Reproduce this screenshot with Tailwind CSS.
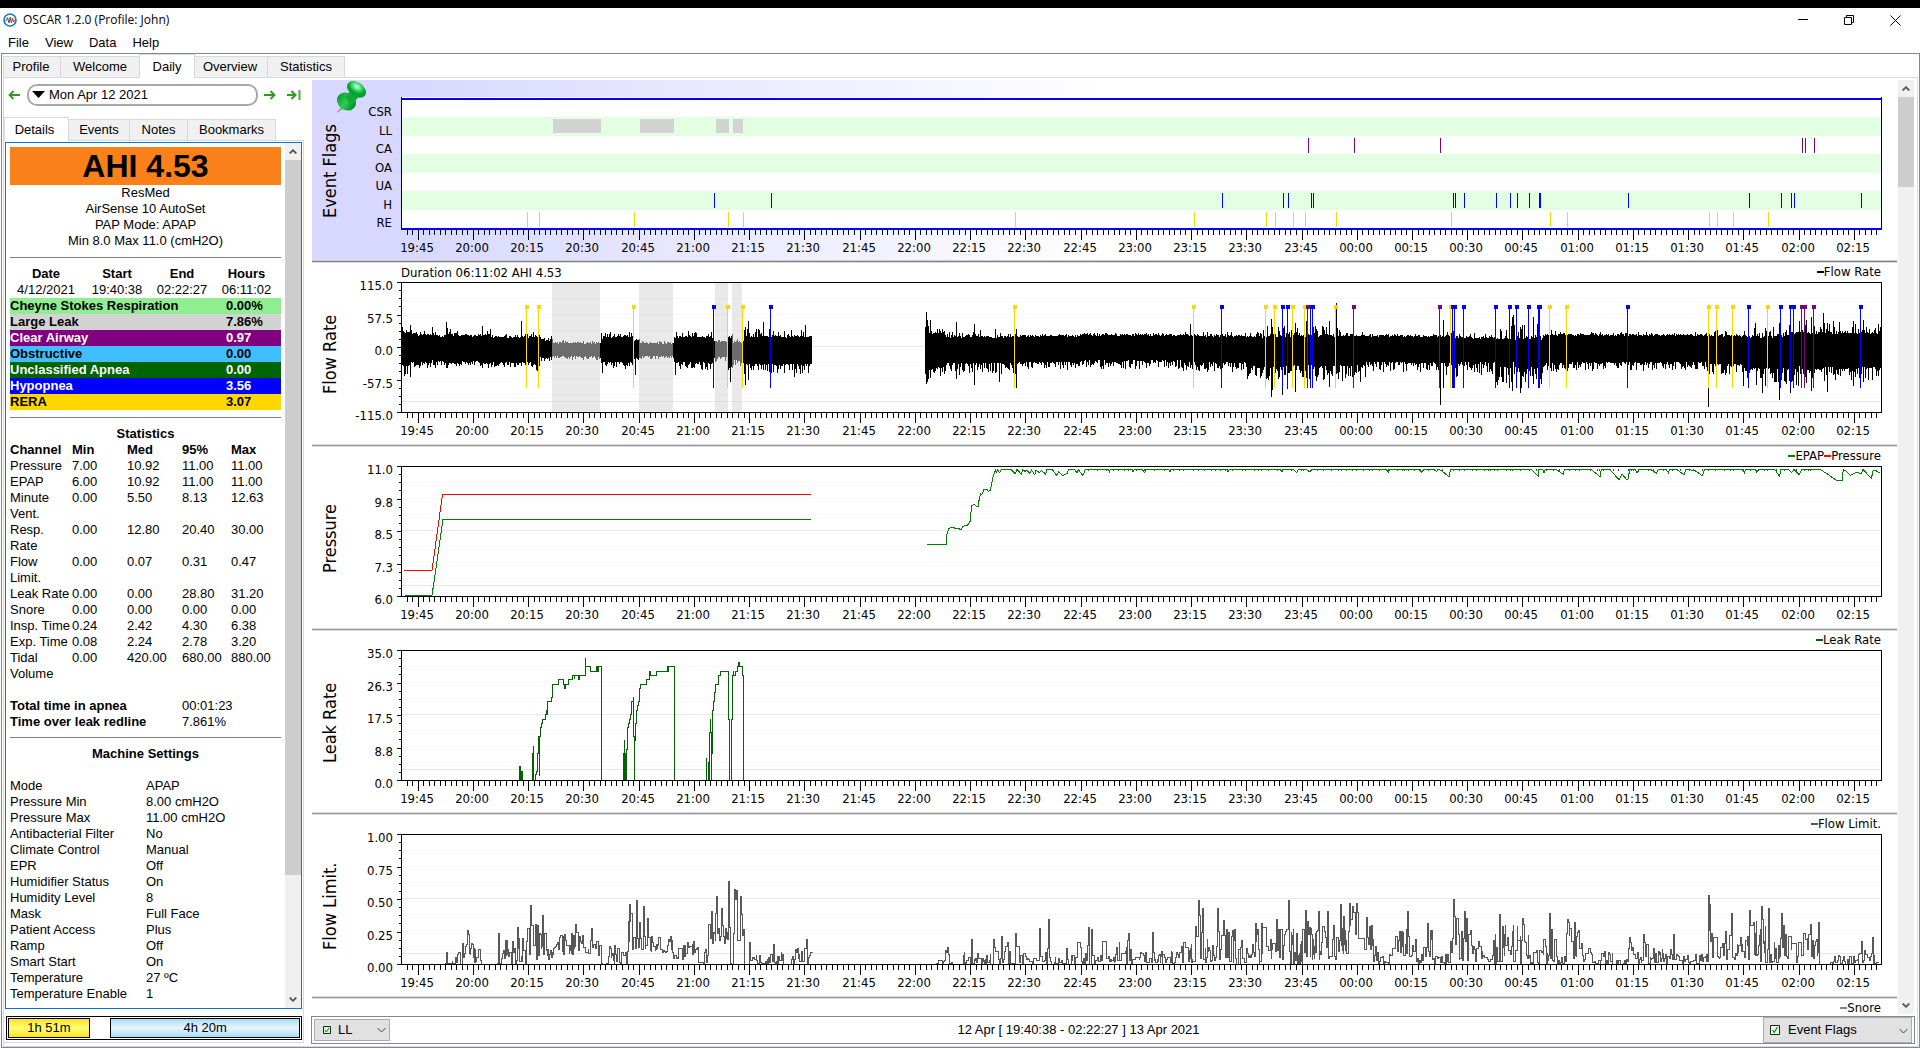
<!DOCTYPE html>
<html lang="en">
<head>
<meta charset="utf-8">
<title>OSCAR 1.2.0 (Profile: John)</title>
<script src="https://cdn.jsdelivr.net/npm/@tailwindcss/browser@4"></script>
</head>
<body class="flex h-screen flex-col overflow-hidden bg-white font-['Liberation_Sans',Arial,sans-serif] text-[13px] leading-4 text-black">
<div class="h-2 shrink-0 bg-black"></div>

<header class="shrink-0">
  <div class="flex h-6 items-center pl-[3px]">
    <svg class="size-[14px]" viewBox="0 0 14 14"><circle cx="7" cy="7" r="6" fill="#fff" stroke="#1878c0" stroke-width="1.6"/><path d="M2.5 7.5h1l1-3 1.5 5.5 1.2-6 1.2 6" fill="none" stroke="#555" stroke-width="1"/><path d="M8.4 10l1.1-5 1 4 .8-1.500h1" fill="none" stroke="#d22" stroke-width="1"/></svg>
    <h1 class="ml-[6px] font-['Open_Sans','Noto_Sans',sans-serif] text-xs">OSCAR 1.2.0 (Profile: John)</h1>
    <div class="ml-auto flex pr-[2px]">
      <button class="flex h-6 w-[46px] items-center justify-center" aria-label="Minimize"><svg class="size-[11px]" viewBox="0 0 11 11"><path d="M0 4.500h10" stroke="#000"/></svg></button>
      <button class="flex h-6 w-[46px] items-center justify-center" aria-label="Restore"><svg class="size-[11px]" viewBox="0 0 11 11" fill="none" stroke="#000"><path d="M.5 2.500h7v7h-7zM2.500 2.500v-2h7v7h-2"/></svg></button>
      <button class="flex h-6 w-[46px] items-center justify-center" aria-label="Close"><svg class="size-[11px]" viewBox="0 0 11 11"><path d="M.5 .5l10 10M10.500 .5l-10 10" stroke="#000"/></svg></button>
    </div>
  </div>
  <nav class="flex h-[21px] items-center gap-4 pl-2">
    <button>File</button><button>View</button><button>Data</button><button>Help</button>
  </nav>
</header>

<main class="ml-px flex min-h-0 flex-1 flex-col border border-[#828790]">
  <div class="ml-px flex h-[23px] shrink-0 items-end text-center">
    <button class="h-[21px] w-[58px] border border-b-0 border-[#d9d9d9] bg-[#f0f0f0] pr-[2px]">Profile</button>
    <button class="h-[21px] w-[78px] border-t border-[#d9d9d9] bg-[#f0f0f0]">Welcome</button>
    <button class="relative -mb-px h-6 w-[56px] border border-b-0 border-[#d9d9d9] bg-white">Daily</button>
    <button class="h-[21px] w-[72px] border-t border-[#d9d9d9] bg-[#f0f0f0] pr-[2px]">Overview</button>
    <button class="h-[21px] w-[78px] border border-b-0 border-[#d9d9d9] bg-[#f0f0f0]">Statistics</button>
  </div>

  <div class="mx-px flex min-h-0 flex-1 border border-[#d9d9d9]">
    <section class="flex w-[300px] shrink-0 flex-col pb-[3px]">
      <div class="flex h-[33px] shrink-0 items-center pl-1">
        <button aria-label="Previous day"><svg class="size-3" viewBox="0 0 12 12"><path d="M5.500 2L1.500 6l4 4M1.500 6H12" fill="none" stroke="#2f9a1e" stroke-width="1.800"/></svg></button>
        <button class="ml-[7px] flex h-[22px] w-[231px] items-center rounded-[10px] border-2 border-[#a8a8a8] pl-[3px]"><svg class="mr-1 h-[7px] w-[13px]" viewBox="0 0 13 7"><path d="M0 0h13L6.500 7z"/></svg>Mon Apr 12 2021</button>
        <button class="ml-[6px]" aria-label="Next day"><svg class="size-3" viewBox="0 0 12 12"><path d="M6.500 2l4 4-4 4M10.500 6H0" fill="none" stroke="#2f9a1e" stroke-width="1.800"/></svg></button>
        <button class="ml-[11px]" aria-label="Latest day"><svg class="h-3 w-[14px]" viewBox="0 0 14 12"><path d="M4.500 2L8.500 6l-4 4M8.500 6H0" fill="none" stroke="#2f9a1e" stroke-width="2"/><path d="M12.500 1v10" stroke="#5aa34e" stroke-width="2"/></svg></button>
      </div>
      <div class="flex h-[29px] shrink-0 items-end">
        <button class="relative -mb-px h-6 w-[65px] border border-b-0 border-[#d9d9d9] bg-white pr-1">Details</button>
        <button class="h-[21px] w-[61px] border-t border-r border-[#d9d9d9] bg-[#f0f0f0]">Events</button>
        <button class="h-[21px] w-[58px] border-t border-r border-[#d9d9d9] bg-[#f0f0f0]">Notes</button>
        <button class="h-[21px] w-[88px] border-t border-r border-[#d9d9d9] bg-[#f0f0f0]">Bookmarks</button>
      </div>
      <div class="flex min-h-0 flex-1 flex-col border-t border-r border-b border-[#d9d9d9] p-px">
        <div class="flex min-h-0 flex-1 border border-[#0078d7]">
          <div class="min-w-0 flex-1 overflow-hidden px-1 pt-1">
            <h2 class="h-[38px] bg-[#fa8119] text-center text-[32px] leading-[38px] font-bold">AHI 4.53</h2>
            <p class="text-center">ResMed<br>AirSense 10 AutoSet<br>PAP Mode: APAP<br>Min 8.0 Max 11.0 (cmH2O)</p>
            <hr class="my-2 border-[#808080]">
            <table class="w-full table-fixed text-center">
              <colgroup><col class="w-[72px]"><col class="w-[70px]"><col class="w-[60px]"><col></colgroup>
              <tr><th>Date</th><th>Start</th><th>End</th><th>Hours</th></tr>
              <tr><td>4/12/2021</td><td>19:40:38</td><td>02:22:27</td><td>06:11:02</td></tr>
            </table>
            <table class="w-full table-fixed font-bold">
              <colgroup><col class="w-[216px]"><col></colgroup>
              <tr class="bg-[#90ee90]"><td>Cheyne Stokes Respiration</td><td>0.00%</td></tr>
              <tr class="bg-[#d3d3d3]"><td>Large Leak</td><td>7.86%</td></tr>
              <tr class="bg-[#800080] text-white"><td>Clear Airway</td><td>0.97</td></tr>
              <tr class="bg-[#40bfff]"><td>Obstructive</td><td>0.00</td></tr>
              <tr class="bg-[#006400] text-white"><td>Unclassified Apnea</td><td>0.00</td></tr>
              <tr class="bg-[#0000ff] text-white"><td>Hypopnea</td><td>3.56</td></tr>
              <tr class="bg-[#ffd700]"><td>RERA</td><td>3.07</td></tr>
            </table>
            <hr class="mt-[7px] mb-2 border-[#808080]">
            <table class="w-full table-fixed text-left">
              <caption class="font-bold">Statistics</caption>
              <colgroup><col class="w-[62px]"><col class="w-[55px]"><col class="w-[55px]"><col class="w-[49px]"><col></colgroup>
              <tbody class="align-top">
              <tr><th>Channel</th><th>Min</th><th>Med</th><th>95%</th><th>Max</th></tr>
              <tr><td>Pressure</td><td>7.00</td><td>10.92</td><td>11.00</td><td>11.00</td></tr>
              <tr><td>EPAP</td><td>6.00</td><td>10.92</td><td>11.00</td><td>11.00</td></tr>
              <tr><td>Minute<br>Vent.</td><td>0.00</td><td>5.50</td><td>8.13</td><td>12.63</td></tr>
              <tr><td>Resp.<br>Rate</td><td>0.00</td><td>12.80</td><td>20.40</td><td>30.00</td></tr>
              <tr><td>Flow<br>Limit.</td><td>0.00</td><td>0.07</td><td>0.31</td><td>0.47</td></tr>
              <tr><td class="whitespace-nowrap">Leak Rate</td><td>0.00</td><td>0.00</td><td>28.80</td><td>31.20</td></tr>
              <tr><td>Snore</td><td>0.00</td><td>0.00</td><td>0.00</td><td>0.00</td></tr>
              <tr><td class="whitespace-nowrap">Insp. Time</td><td>0.24</td><td>2.42</td><td>4.30</td><td>6.38</td></tr>
              <tr><td class="whitespace-nowrap">Exp. Time</td><td>0.08</td><td>2.24</td><td>2.78</td><td>3.20</td></tr>
              <tr><td>Tidal<br>Volume</td><td>0.00</td><td>420.00</td><td>680.00</td><td>880.00</td></tr>
              </tbody>
            </table>
            <table class="mt-4 w-full table-fixed text-left">
              <colgroup><col class="w-[172px]"><col></colgroup>
              <tr><th>Total time in apnea</th><td>00:01:23</td></tr>
              <tr><th>Time over leak redline</th><td>7.861%</td></tr>
            </table>
            <hr class="mt-[7px] mb-2 border-[#808080]">
            <table class="w-full table-fixed">
              <caption class="mb-4 font-bold">Machine Settings</caption>
              <colgroup><col class="w-[136px]"><col></colgroup>
              <tr><td>Mode</td><td>APAP</td></tr>
              <tr><td>Pressure Min</td><td>8.00 cmH2O</td></tr>
              <tr><td>Pressure Max</td><td>11.00 cmH2O</td></tr>
              <tr><td>Antibacterial Filter</td><td>No</td></tr>
              <tr><td>Climate Control</td><td>Manual</td></tr>
              <tr><td>EPR</td><td>Off</td></tr>
              <tr><td>Humidifier Status</td><td>On</td></tr>
              <tr><td>Humidity Level</td><td>8</td></tr>
              <tr><td>Mask</td><td>Full Face</td></tr>
              <tr><td>Patient Access</td><td>Plus</td></tr>
              <tr><td>Ramp</td><td>Off</td></tr>
              <tr><td>Smart Start</td><td>On</td></tr>
              <tr><td>Temperature</td><td>27 ºC</td></tr>
              <tr><td>Temperature Enable</td><td>1</td></tr>
            </table>
          </div>
          <div class="flex w-4 shrink-0 flex-col bg-[#f0f0f0]">
            <button class="flex h-[17px] items-center justify-center" aria-label="Scroll up"><svg class="h-[5px] w-2" viewBox="0 0 8 5"><path d="M.7 4.500L4 1.200l3.300 3.300" fill="none" stroke="#555" stroke-width="1.800"/></svg></button>
            <div class="min-h-0 flex-1"><div class="h-[86%] bg-[#cdcdcd]"></div></div>
            <button class="flex h-[17px] items-center justify-center" aria-label="Scroll down"><svg class="h-[5px] w-2" viewBox="0 0 8 5"><path d="M.7 .5L4 3.800 7.300 .5" fill="none" stroke="#555" stroke-width="1.800"/></svg></button>
          </div>
        </div>
        <div class="mt-[7px] mb-px ml-px flex h-6 shrink-0 justify-between border border-black p-px text-center leading-[18px]">
          <div class="w-[28%] border border-black bg-linear-to-b from-[#ffe020] via-[#ffff70] to-[#ffe020]">1h 51m</div>
          <div class="w-[65%] border border-black bg-linear-to-b from-[#a8dcf4] via-[#e8f6fc] to-[#a8dcf4]">4h 20m</div>
        </div>
      </div>
    </section>

    <section class="flex min-w-0 flex-1 flex-col pt-[2px] pr-[2px] pb-[2px] pl-[7px]">
      <div class="mx-px flex min-h-0 flex-1">
        <div id="graphs" class="mr-px min-w-0 flex-1 overflow-hidden font-['DejaVu_Sans_Condensed','Noto_Sans',sans-serif]"></div>
        <div class="flex w-4 shrink-0 flex-col bg-[#f0f0f0]">
          <button class="flex h-[17px] items-center justify-center" aria-label="Scroll graphs up"><svg class="h-[5px] w-2" viewBox="0 0 8 5"><path d="M.7 4.500L4 1.200l3.300 3.300" fill="none" stroke="#555" stroke-width="1.800"/></svg></button>
          <div class="min-h-0 flex-1"><div class="h-[10%] bg-[#cdcdcd]"></div></div>
          <button class="flex h-[17px] items-center justify-center" aria-label="Scroll graphs down"><svg class="h-[5px] w-2" viewBox="0 0 8 5"><path d="M.7 .5L4 3.800 7.300 .5" fill="none" stroke="#555" stroke-width="1.800"/></svg></button>
        </div>
      </div>
      <div class="mt-[2px] flex h-7 shrink-0 items-center justify-between border border-[#828790] px-[2px]">
        <div class="relative">
          <select aria-label="Event type" class="h-[22px] w-[76px] appearance-none border border-[#adadad] bg-[#e1e1e1] pl-[23px] leading-4"><option>LL</option></select>
          <svg class="pointer-events-none absolute top-[7px] left-[9px] size-2" viewBox="0 0 8 8"><path d="M.5.5h7v7h-7z" fill="#cfc" stroke="#222"/><path d="M2 4l1.300 2L6 2" fill="none" stroke="#080"/></svg>
          <svg class="pointer-events-none absolute top-2 right-1 h-[6px] w-[9px]" viewBox="0 0 9 6"><path d="M.5 1l4 4 4-4" fill="none" stroke="#444"/></svg>
        </div>
        <p class="pl-1">12 Apr [ 19:40:38 - 02:22:27 ] 13 Apr 2021</p>
        <div class="relative">
          <select aria-label="Visible graphs" class="h-[26px] w-[149px] appearance-none border border-[#adadad] bg-[#e1e1e1] pl-6 leading-4"><option>Event Flags</option></select>
          <svg class="pointer-events-none absolute top-2 left-[7px] size-[10px]" viewBox="0 0 10 10"><path d="M.5.5h9v9h-9z" fill="#efe" stroke="#222"/><path d="M2.500 5l1.700 2.500 3.300-5.500" fill="none" stroke="#080" stroke-width="1.200"/></svg>
          <svg class="pointer-events-none absolute top-[11px] right-1 h-[6px] w-[9px]" viewBox="0 0 9 6"><path d="M.5 1l4 4 4-4" fill="none" stroke="#444"/></svg>
        </div>
      </div>
    </section>
  </div>
</main>

<script>
const W = 1481, H = 131;
const PX_PER_MIN = 3.683;
const RE = [126,138,233,327,342,614,793,865,874,892,904,935,1050,1149,1166,1308,1316,1332,1367];
const HY = [313,370,821,882,887,910,912,1052,1054,1063,1095,1109,1116,1128,1138,1139,1227,1348,1380,1390,1393,1460];
const CA = [907,953,1039,1401,1404,1413];
const LL = [[152,48],[239,34],[315,13],[332,10]];

// Small seeded generator, so that the traces are the same on every load
let seed = 20210412;
const rnd = () => (seed = (seed * 1664525 + 1013904223) >>> 0) / 4294967296;

const bars = (xs, y, h, c) => `<path d="${xs.map(x => `M${x + .5} ${y}v${h}`).join('')}" stroke="${c}"/>`;
const svg = (h, body) => `<svg class="block w-full" style="height:${h}px" viewBox="0 0 ${W} ${h}" preserveAspectRatio="none" shape-rendering="crispEdges" fill="none">${body}</svg>`;

function axis() {
  let minor = '', major = '', labels = '';
  for (let i = -2; ; i++) {
    const x = Math.floor((4.367 + i * 1.5) * PX_PER_MIN + 1);
    if (x >= W - 1) break;
    if (i % 10 === 0) {
      major += `M${x + .5} 0v10`;
      const m = (19 * 60 + 45 + i * 1.5) % 1440;
      const t = String(Math.floor(m / 60)).padStart(2, '0') + ':' + String(m % 60).padStart(2, '0');
      labels += `<span class="absolute -translate-x-1/2" style="left:${((x - 1) / W * 100).toFixed(3)}%">${t}</span>`;
    } else minor += `M${x + .5} 0v5`;
  }
  return svg(10, `<path d="${minor}${major}" stroke="#000"/>`) + `<div class="relative h-4">${labels}</div>`;
}

function grid() {
  let s = '';
  for (let y = 16; y < 128; y += 16) s += `<path d="M0 ${y + .5}H${W}" stroke="${y === 64 ? '#e8e8e8' : '#f7f7f7'}"/>`;
  return s + `<path d="M0 119.500H${W}" stroke="#e8e8e8"/>`;
}
const frame = `<path d="M.5 .5H${W - .5}V${H - .5}H.5z" stroke="#000"/>`;

function yTicks() {
  let d = '';
  for (let i = 0; i <= 16; i++) { const y = Math.round(i * 130 / 16) + .5; d += i % 4 ? `M5 ${y}h2` : `M3 ${y}h4`; }
  return `<svg class="mt-[19px] h-[131px] w-[7px] shrink-0" viewBox="0 0 7 131" shape-rendering="crispEdges"><path d="${d}" stroke="#000"/></svg>`;
}

function flowRate() {
  // [from, up, down, extra up, extra down]
  const env = [[0,14,16,10,12],[10,11,13,4,7],[35,10,12,3,5],[44,11,14,7,5],[58,10,12,3,5],[79,11,14,8,5],[90,9,13,3,6],[130,9,14,5,8],[139,6,8,4,4],[152,3,7,2,4],[200,9,13,5,7],[232,6,9,3,3],[239,3,7,2,4],[273,9,13,6,8],[313,4,8,2,5],[327,10,18,3,15],[332,4,10,8,8],[343,9,15,9,10],[411,0,0,0,0],[524,19,20,15,14],[528,12,18,8,10],[545,9,14,7,12],[615,10,13,3,8],[680,11,11,2,9],[780,10,13,5,10],[845,9,17,12,16],[890,10,16,11,16],[940,10,16,5,17],[965,10,13,2,10],[1039,9,14,9,18],[1060,8,13,5,14],[1095,7,18,18,20],[1142,11,14,6,9],[1170,11,13,3,9],[1306,10,15,6,12],[1345,9,19,10,20],[1388,13,20,13,18],[1420,13,18,11,14],[1481,0,0,0,0]];
  const spikes = {9:[22,29],31:[20,12],45:[25,20],81:[21,20],120:[26,18],201:[8,25],234:[7,27],274:[9,27],329:[9,34],344:[20,37],347:[26,32],362:[25,22],393:[12,29],404:[22,16],525:[35,36],526:[27,34],529:[27,30],555:[25,31],573:[23,37],598:[10,34],615:[18,40],789:[23,20],870:[28,49],871:[20,42],881:[22,47],886:[20,41],894:[24,44],905:[26,30],928:[26,39],935:[44,26],1039:[12,57],1042:[27,40],1052:[16,40],1111:[30,43],1112:[32,14],1119:[20,45],1120:[18,40],1132:[30,36],1137:[24,20],1307:[27,59],1342:[12,38],1354:[24,20],1361:[14,45],1378:[24,52],1389:[37,45],1398:[26,18],1410:[30,43],1422:[34,20],1426:[24,44],1452:[26,38],1462:[27,34],1477:[23,28]};
  let d = '', k = 0;
  for (let x = 1; x < W - 1; x++) {
    while (k < env.length - 1 && env[k + 1][0] <= x) k++;
    const e = env[k];
    if (!e[1]) continue;
    let u = e[1] + e[3] * rnd() ** 4 + rnd() * 2, v = e[2] + 1 + e[4] * rnd() ** 1.800;
    if (spikes[x]) [u, v] = spikes[x];
    d += `M${x + .5} ${65 - Math.round(u)}V${66 + Math.round(v)}`;
  }
  const flags = (xs, c) => bars(xs.map(x => x - 1), 24, 82, c) + xs.map(x => `<path d="M${x - 2} 23h4v4h-4z" fill="${c}"/>`).join('');
  return grid() + `<path d="${d}" stroke="#000"/>` + LL.map(([x, w]) => `<path d="M${x - 1} 1h${w}v129h-${w}z" fill="#d3d3d3" fill-opacity=".51"/>`).join('')
    + flags(RE, '#ffd700') + flags(HY, '#0000ff') + flags(CA, '#800080') + frame;
}

function pressure() {
  const pts = [42,313,71,313,72,285,75,265,79,262,86,265,94,268,97,259,104,255,108,243,110,197,114,193,117,199,120,199,121,185,124,161,126,163,129,149,134,149,136,155,139,150,141,132,143,110,147,90,148,98,150,90,153,98,156,88,170,88,175,97,177,101,180,88,184,97,187,104,188,88,192,94,195,90,199,100,202,90,207,104,209,92,214,97,218,92,224,103,226,88,234,88,241,107,244,95,250,107,257,100,259,88,268,88,272,98,274,88,281,107,285,88,320,88,322,95,323,88,357,88,358,95,360,88,372,88,376,98,378,88,413,88,415,97,417,88,503,88,504,95,506,88,584,88,587,95,589,88,605,88,610,98,612,88,623,88,630,95,632,88,748,88,751,97,753,88,798,88,802,98,805,88,820,88,825,94,827,88,832,92,844,110,846,88,970,88,981,109,982,88,988,88,990,98,992,88,1010,90,1020,104,1021,88,1062,88,1076,110,1078,88,1091,88,1105,119,1110,103,1117,119,1120,115,1121,88,1130,88,1133,98,1137,88,1155,90,1163,100,1165,90,1178,90,1181,98,1183,88,1195,90,1205,105,1208,88,1222,92,1233,107,1237,88,1294,88,1298,98,1300,88,1315,88,1317,97,1320,88,1345,90,1352,109,1354,88,1366,90,1370,97,1375,90,1382,104,1386,88,1414,88,1425,101,1431,110,1440,122,1448,121,1450,88,1455,95,1461,106,1470,97,1478,101,1480,88,1493,115,1496,90,1500,92,1507,100];
  let dips = '';
  for (let x = 290; x < 1410; x += 3 + Math.floor(rnd() * 14)) dips += `M${x} 86V93`;
  return grid() + '<path d="M3 104.500H31L41.500 28.500H410" stroke="#f00"/><path d="M4 129.500H31L42 53.500H410" stroke="#008000"/>'
    + `<g transform="translate(499 -26) scale(.6506 .3333)" stroke="#008000"><polyline vector-effect="non-scaling-stroke" points="${pts.join(' ')}"/><path vector-effect="non-scaling-stroke" d="${dips}"/></g>` + frame;
}

function leakRate() {
  const d = 'M614 1020V980H618V1020M620 1020V994H622V1020M651 1020V940H653V917V1020M659 1020V1005H662V994H665V940H667V890H670V1007V890H673V862H676V850H679V838H687V823H690V811V823H693V785H704V772H707V734H723V718H738V734H740V745H743V734H751V718H763V707H768V718V707H779V718H782V707H799V655V680H814V694H830V680H833V694H835V680H845V1020'
    + 'M905 1020V940H908V901V1020H911V940H914V1020V928H917V862H920V850H923V838H926V823H929V785H934V772V890H936V1020V901H939V850H942V811H945V797H948V785H951V745H953V734H970V718H979V694H981V707H998V694H1029V680H1031V694H1033V680H1048V1020'
    + 'M1138 1020V955V1020M1143 1020V967V1020M1146 1020V878H1149V838V878H1152V1020V940H1155V811H1157V785H1160V757H1163V734H1171V707H1177V694H1200V838H1202V1020M1208 1020V838H1211V707H1214V694V707H1219V694H1225V680H1228V667H1231V680H1239V707H1241V1020';
  return grid() + `<g transform="translate(-101 -210) scale(.3571 .3333)" stroke="#006400"><path vector-effect="non-scaling-stroke" d="${d}"/></g>` + frame;
}

function flowLimit() {
  // [from, low, high]
  const env = [[0,0,0],[44,0,12],[60,2,30],[74,0,16],[80,0,0],[96,0,12],[100,0,26],[125,5,42],[145,5,25],[158,10,32],[190,8,24],[200,0,1],[207,0,20],[227,15,55],[248,12,30],[272,5,26],[293,0,18],[307,20,60],[329,0,3],[332,15,65],[343,0,0],[348,0,14],[353,0,10],[372,0,18],[382,0,0],[390,0,18],[411,-1,-1],[524,0,0],[535,0,5],[544,0,15],[551,0,0],[560,0,14],[590,0,20],[600,0,26],[609,0,18],[650,0,8],[664,0,22],[682,0,34],[695,2,24],[722,1,25],[727,1,15],[775,1,22],[792,2,55],[805,3,38],[830,0,38],[838,0,25],[848,1,42],[875,0,45],[890,0,45],[912,5,45],[940,10,52],[958,15,40],[972,1,18],[988,8,34],[1004,6,40],[1015,1,18],[1022,0,38],[1032,0,10],[1048,2,48],[1072,2,25],[1088,1,44],[1110,1,40],[1130,0,26],[1146,2,45],[1155,0,8],[1165,5,42],[1182,1,22],[1195,0,14],[1212,0,8],[1227,1,22],[1250,1,16],[1280,1,12],[1307,6,34],[1325,5,42],[1345,2,45],[1368,2,30],[1378,5,48],[1390,0,22],[1400,5,36],[1418,0,0],[1428,0,10],[1450,0,14],[1477,-1,-1]];
  const spikes = {66:34,97:31,116:37,129:59,134:40,141:49,174:40,190:36,228:60,235:64,242:58,315:68,327:83,333:75,335:74,339:68,348:22,372:20,405:25,546:17,570:25,592:25,600:28,614:31,638:36,647:45,687:37,690:35,727:31,751:32,797:64,801:56,816:56,822:44,887:64,904:54,917:53,926:53,939:60,948:61,951:58,955:61,965:47,1006:53,1026:41,1052:65,1063:53,1098:50,1121:46,1148:51,1166:45,1173:42,1228:27,1242:30,1272:30,1307:69,1308:60,1330:51,1348:54,1360:58,1367:56,1380:51,1409:40,1417:42,1460:23,1471:27};
  let pts = [[]], k = 0, v = 0;
  for (let x = 0; x < W; x++) {
    while (k < env.length - 1 && env[k + 1][0] <= x) k++;
    const [, lo, hi] = env[k];
    if (lo < 0) { if (pts.at(-1).length) pts.push([]); continue; }
    // The level holds for a few columns now and then, and steps straight up or down between them
    const draws = x in spikes ? [spikes[x]] : rnd() < .3 ? [Math.min(v, hi)] : [lo + (hi - lo) * rnd() ** 1.500];
    if (!(x in spikes) && rnd() < .3) draws.push(lo + (hi - lo) * rnd() ** 2);
    if (x in spikes) pts.at(-1).push(`${x + .5},${130.5 - Math.round(v)}`);
    for (v of draws) pts.at(-1).push(`${x + .5},${130.5 - Math.round(v)}`);
    pts.at(-1).push(`${x + 1.5},${130.5 - Math.round(v)}`);
    v = Math.min(v, hi);
  }
  return grid() + pts.filter(p => p.length).map(p => `<polyline points="${p.join(' ')}" stroke="#585858"/>`).join('') + frame;
}

function panel(title, yLabels, body, legend, note = '') {
  const leg = legend.map(([n, c]) => `<span class="flex items-center"><span class="h-[2px] w-[7px]" style="background:${c}"></span>${n}</span>`).join('');
  return `<article class="flex h-[184px] border-b border-[#dcdcdc] pr-[15px] text-[13px] leading-4 shadow-[inset_0_-1px_#999999,inset_0_-2px_#dcdcdc]">
    <h3 class="w-10 shrink-0 rotate-180 text-center text-[18px] leading-9 [writing-mode:vertical-rl]">${title}</h3>
    <div class="mt-[15px] flex h-[146px] w-[42px] shrink-0 flex-col justify-between pr-px text-right">${yLabels.map(l => `<span>${l}</span>`).join('')}</div>
    ${yTicks()}
    <div class="min-w-0 flex-1"><div class="flex h-[19px] items-center justify-between"><span>${note}</span><span class="flex pr-px pb-[2px]">${leg}</span></div>${svg(H, body)}${axis()}</div>
  </article>`;
}

function eventFlags() {
  let b = '<path d="M0 0h1481v133h-1481z" fill="#fff"/>';
  for (const y of [20, 57, 94]) b += `<path d="M1 ${y}h1480v19h-1480z" fill="#e2ffe2"/>`;
  b += '<path d="M.5 0v133M1480.500 0v133" stroke="#000"/><path d="M0 2h1481M0 132h1481" stroke="#00f" stroke-width="2"/>';
  b += LL.map(([x, w]) => `<path d="M${x} 22h${w}v14h-${w}z" fill="#d3d3d3"/>`).join('');
  b += bars(CA, 41, 15, '#800080') + bars(HY, 96, 15, '#00f') + bars(RE, 115, 15, '#ffd700');
  const rows = ['CSR', 'LL', 'CA', 'OA', 'UA', 'H', 'RE'];
  return `<article class="relative flex h-[183px] border-b border-[#dcdcdc] bg-linear-to-r from-[#d8d8ff] from-6% to-white to-50% pr-[15px] text-[13px] leading-4 shadow-[inset_0_-1px_#808080,inset_0_-2px_#d0d0d0]">
    <svg class="absolute top-px left-6 h-8 w-[31px]" viewBox="0 0 31 32"><defs><radialGradient id="cap" cx=".45" cy=".35"><stop offset="0" stop-color="#d8ffe0"/><stop offset=".55" stop-color="#3fe070"/><stop offset="1" stop-color="#06a52e"/></radialGradient><linearGradient id="base"><stop offset="0" stop-color="#0a9f2e"/><stop offset=".5" stop-color="#2bcd50"/><stop offset="1" stop-color="#068a26"/></linearGradient></defs><path d="M1.500 31l6-7 2 2z" fill="#a09aa8" stroke="#a09aa8"/><ellipse cx="10.500" cy="20.500" rx="10" ry="8.500" transform="rotate(35 10.500 20.500)" fill="url(#base)"/><path d="M10 16l5-7 7 8-5 5c-3 1-7-3-7-6z" fill="#12a838"/><ellipse cx="20.500" cy="8.500" rx="10.500" ry="7" transform="rotate(35 20.500 8.500)" fill="#08a032"/><ellipse cx="20.500" cy="7.500" rx="9" ry="6" transform="rotate(35 20.500 7.500)" fill="url(#cap)"/></svg>
    <h3 class="w-10 shrink-0 rotate-180 text-center text-[18px] leading-9 [writing-mode:vertical-rl]">Event Flags</h3>
    <div class="mt-[24px] flex h-[127px] w-[42px] shrink-0 flex-col justify-between pr-[2px] text-right">${rows.map(r => `<span>${r}</span>`).join('')}</div>
    <div class="w-[7px] shrink-0"></div>
    <div class="min-w-0 flex-1 pt-[17px]">${svg(133, b)}${axis()}</div>
  </article>`;
}

document.getElementById('graphs').innerHTML = eventFlags()
  + panel('Flow Rate', ['115.0', '57.5', '0.0', '-57.5', '-115.0'], flowRate(), [['Flow Rate', '#000']], 'Duration 06:11:02 AHI 4.53')
  + panel('Pressure', ['11.0', '9.8', '8.5', '7.3', '6.0'], pressure(), [['EPAP', '#008000'], ['Pressure', '#f00']])
  + panel('Leak Rate', ['35.0', '26.3', '17.5', '8.8', '0.0'], leakRate(), [['Leak Rate', '#006400']])
  + panel('Flow Limit.', ['1.00', '0.75', '0.50', '0.25', '0.00'], flowLimit(), [['Flow Limit.', '#585858']])
  + '<article class="flex h-[17px] items-center justify-end pr-4 text-[13px] leading-4"><span class="h-[2px] w-[7px] bg-[#808080]"></span>Snore</article>';
</script>
</body>
</html>
